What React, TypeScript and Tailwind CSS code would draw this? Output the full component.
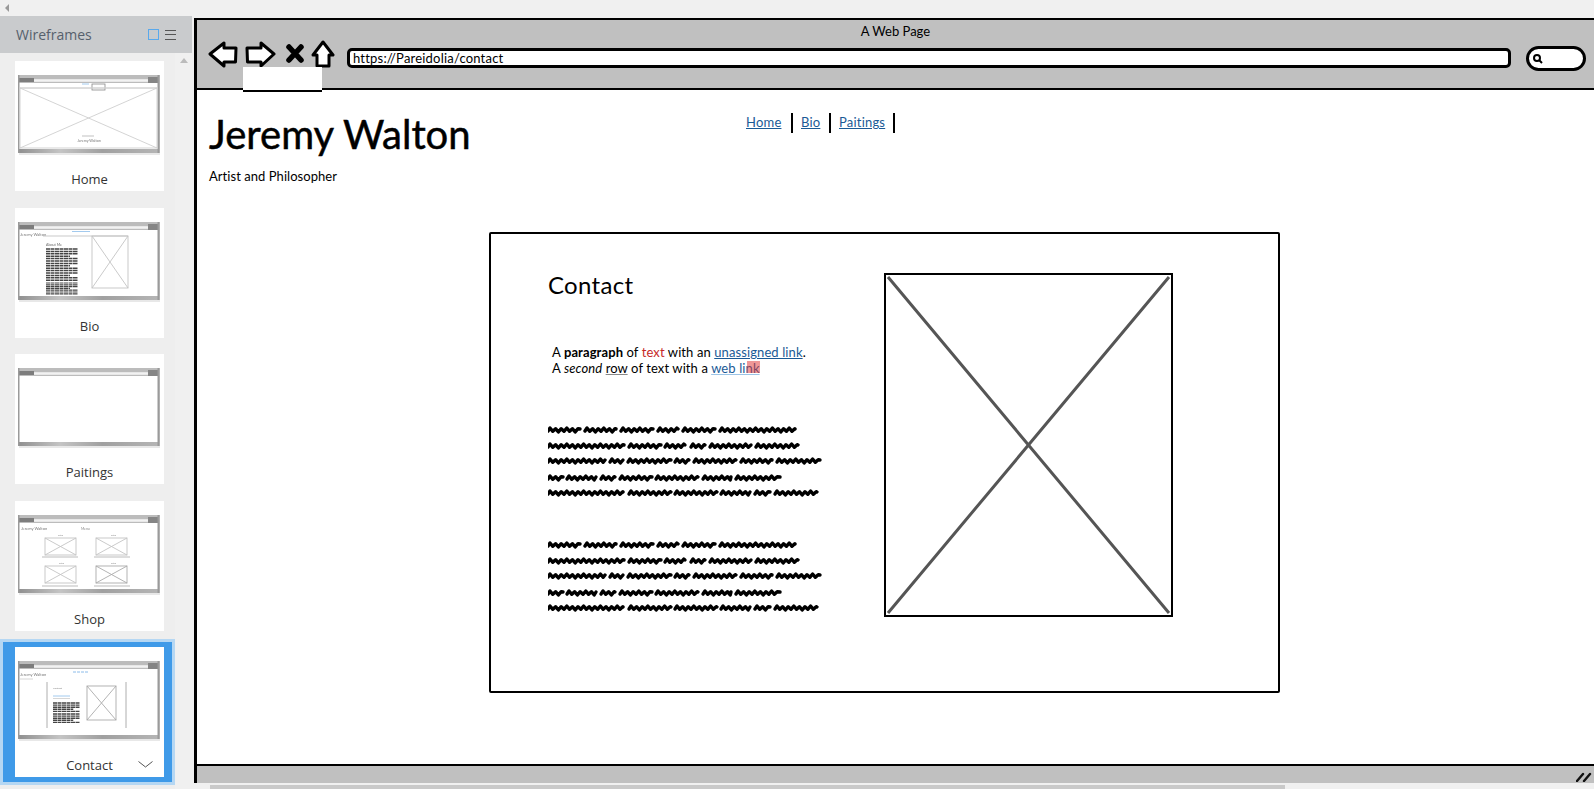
import React from "react";

const SK = { fontFamily: '"Lato", "Liberation Sans", sans-serif' };

const block = [
  [[0,32],[37,68],[73,105],[110,130],[135,167],[172,247]],
  [[0,76],[81,113],[117,137],[143,157],[162,203],[208,250]],
  [[0,57],[62,75],[80,123],[127,141],[146,188],[193,224],[229,272]],
  [[0,15],[19,48],[53,67],[72,104],[108,150],[155,183],[188,232]],
  [[0,75],[81,123],[127,169],[173,202],[207,222],[227,269]],
];
const ys = [4, 20, 35, 52, 67];

function wordPath(a: number, b: number, y: number) {
  let d = `M${a} ${y + 1}`;
  let up = true;
  let n = 0;
  for (let x = a + 2; x < b; x += 2.8) {
    const amp = n % 3 === 0 ? 2 : 1.3;
    d += ` L${x.toFixed(1)} ${y + (up ? -amp : amp)}`;
    up = !up;
    n++;
  }
  d += ` L${b} ${y - 1}`;
  return d;
}

function Scribble() {
  return (
    <svg width="274" height="72" viewBox="0 0 274 72" className="block">
      {block.map((line, i) =>
        line.map(([a, b], j) => (
          <path key={`${i}-${j}`} d={wordPath(a, b, ys[i])} fill="none" stroke="#000" strokeWidth="3.4" strokeLinejoin="round" strokeLinecap="round" />
        ))
      )}
    </svg>
  );
}

function Chrome({ children }: { children?: React.ReactNode }) {
  return (
    <svg width="143" height="80" viewBox="0 0 143 80" className="block blur-[0.35px]">
      <defs>
        <linearGradient id="g" x1="0" x2="1" y1="0" y2="0">
          <stop offset="0" stopColor="#8f8f8f" />
          <stop offset="0.3" stopColor="#c4c4c4" />
          <stop offset="0.6" stopColor="#a0a0a0" />
          <stop offset="1" stopColor="#b5b5b5" />
        </linearGradient>
      </defs>
      <rect x="1" y="1" width="141" height="79" fill="#e8e8e8" />
      <rect x="0.5" y="0.5" width="141" height="77" fill="#fff" stroke="#b0b0b0" strokeWidth="1" />
      <rect x="0" y="0" width="141" height="8" fill="#bcbcbc" />
      <rect x="1" y="3" width="15" height="4" fill="#7d7d7d" />
      <rect x="16" y="4.200" width="114" height="2.600" fill="#f2f2f2" />
      <rect x="130" y="2" width="10" height="6" fill="#858585" />
      <rect x="0" y="74" width="141" height="4" fill="url(#g)" />
      <rect x="0" y="0" width="1.500" height="78" fill="#9a9a9a" />
      <rect x="139.500" y="0" width="1.500" height="78" fill="#9a9a9a" />
      {children}
    </svg>
  );
}

function XBox({ x, y, w, h, c = "#c4c4c4" }: { x: number; y: number; w: number; h: number; c?: string }) {
  return (
    <g fill="none" stroke={c} strokeWidth="0.9">
      <rect x={x} y={y} width={w} height={h} />
      <path d={`M${x} ${y}L${x + w} ${y + h}M${x + w} ${y}L${x} ${y + h}`} />
    </g>
  );
}

const tinyLines = (x: number, y: number, n: number, w: number, step = 2.4, sw = 1.5) => (
  <g stroke="#444" strokeWidth={sw} strokeDasharray="4 0.5">
    {Array.from({ length: n }).map((_, i) => (
      <path key={i} d={`M${x} ${y + i * step}h${i % 4 === 3 ? w * 0.75 : w}`} />
    ))}
  </g>
);

function ThumbHome() {
  return (
    <Chrome>
      <rect x="74" y="9" width="13" height="6" fill="#fff" stroke="#888" strokeWidth="0.8" />
      <path d="M2 13H139" stroke="#ccc" strokeWidth="0.8" />
      <path d="M64 9h7" stroke="#8cbcea" strokeWidth="0.8" />
      <XBox x={2} y={13} w={137} h={60} c="#cfcfcf" />
      <path d="M64 61h12" stroke="#999" strokeWidth="0.6" />
      <text x="71" y="67" textAnchor="middle" fontSize="3.6" fill="#777" style={SK}>Jeremy Walton</text>
    </Chrome>
  );
}
function ThumbBio() {
  return (
    <Chrome>
      <text x="2" y="14" fontSize="4" fill="#777" style={SK}>Jeremy Walton</text>
      <path d="M54 9.500h18" stroke="#8cbcea" strokeWidth="0.8" />
      <path d="M25 14h85" stroke="#bbb" strokeWidth="0.8" />
      <XBox x={74} y={14} w={36} h={52} />
      <text x="28" y="24" fontSize="3.6" fill="#666" style={SK}>About Me</text>
      {tinyLines(28, 27, 14, 32)}
      {tinyLines(28, 61, 7, 32, 1.8, 1.2)}
    </Chrome>
  );
}
function ThumbShop() {
  return (
    <Chrome>
      <text x="3" y="15" fontSize="4" fill="#777" style={SK}>Jeremy Walton</text>
      <text x="63" y="15" fontSize="3.4" fill="#888" style={SK}>Menu</text>
      <text x="40" y="21" fontSize="2.6" fill="#888" style={SK}>Title</text>
      <text x="93" y="21" fontSize="2.6" fill="#888" style={SK}>Title</text>
      <text x="41" y="49" fontSize="2.6" fill="#888" style={SK}>Title</text>
      <text x="93" y="49" fontSize="2.6" fill="#888" style={SK}>Title</text>
      <XBox x={27} y={23} w={31} h={17} />
      <XBox x={78} y={23} w={31} h={17} />
      <XBox x={27} y={51} w={31} h={17} />
      <XBox x={78} y={51} w={31} h={17} c="#aaa" />
      <path d="M24 42h36M76 42h36M24 71h36M76 71h36" stroke="#aaa" strokeWidth="0.8" />
    </Chrome>
  );
}
function ThumbContact() {
  return (
    <Chrome>
      <text x="2" y="15" fontSize="4" fill="#777" style={SK}>Jeremy Walton</text>
      <path d="M55 11h15" stroke="#8cbcea" strokeWidth="1" strokeDasharray="3 1" />
      <path d="M2 18h13" stroke="#ccc" strokeWidth="0.8" />
      <path d="M29 21v46M108 21v46" stroke="#999" strokeWidth="0.8" />
      <text x="35" y="28" fontSize="2.6" fill="#888" style={SK}>Contact</text>
      <path d="M35 35h17" stroke="#8cbcea" strokeWidth="0.8" />
      <path d="M35 37.500h17" stroke="#ccc" strokeWidth="0.8" />
      {tinyLines(35, 42, 5, 27, 2.1, 1.4)}
      {tinyLines(35, 53, 5, 27, 2.1, 1.4)}
      <XBox x={69} y={25} w={29} h={34} c="#aaa" />
    </Chrome>
  );
}

const thumbs = [
  { label: "Home", t: <ThumbHome /> },
  { label: "Bio", t: <ThumbBio /> },
  { label: "Paitings", t: <Chrome /> },
  { label: "Shop", t: <ThumbShop /> },
];

function Card({ label, thumb }: { label: string; thumb: React.ReactNode }) {
  return (
    <div className="relative w-[149px] h-[130px] bg-white flex flex-col items-center pt-[14px] shrink-0">
      {thumb}
      <div className="mt-[16px] text-[13px] leading-[16px] text-[#333]" style={{ fontFamily: '"Open Sans", sans-serif' }}>{label}</div>
    </div>
  );
}

function Sidebar() {
  return (
    <aside className="w-[192px] shrink-0 flex flex-col bg-[#f0f0f0]" style={{ fontFamily: '"Open Sans", sans-serif' }}>
      <div className="h-[37px] bg-[#c9cbcd] flex items-center pl-4 pr-4 shrink-0">
        <span className="text-[14px] text-[#56606c] flex-1">Wireframes</span>
        <span className="w-[11px] h-[11px] border border-[#5aa9ec] mr-[6px]" />
        <span className="w-[11px] h-[10px] flex flex-col justify-between">
          <span className="h-px bg-[#555]" /><span className="h-px bg-[#555]" /><span className="h-px bg-[#555]" />
        </span>
      </div>
      <div className="flex flex-1 min-h-0">
        <div className="w-[175px] bg-[#eeeeee] flex flex-col pl-[15px] pt-2 gap-[16.5px] relative">
          {thumbs.map((c) => <Card key={c.label} label={c.label} thumb={c.t} />)}
          <div className="w-[175px] -ml-[15px] -mt-[8.5px] h-[146px] border-[3px] border-[#b5d7f3] bg-[#3f9ae8] shrink-0 pl-[12px] pt-[5px]">
            <div className="relative w-[149px]">
              <Card label="Contact" thumb={<ThumbContact />} />
              <svg width="15" height="7" viewBox="0 0 15 7" className="absolute right-[11px] bottom-[9px]">
                <path d="M0.500 0.500L7.500 6L14.500 0.500" fill="none" stroke="#555" strokeWidth="1" />
              </svg>
            </div>
          </div>
        </div>
        <div className="flex-1 flex justify-center pt-[5px]">
          <span className="w-0 h-0 border-x-[4px] border-x-transparent border-b-[5px] border-b-[#bbbbbb]" />
        </div>
      </div>
    </aside>
  );
}

function Toolbar() {
  return (
    <div className="flex items-center h-[30px] ml-[11px]">
      <svg width="130" height="30" viewBox="208 40 130 30" className="shrink-0 -mt-[2px]">
        <g fill="#fff" stroke="#000" strokeWidth="3" strokeLinejoin="round">
          <path d="M210 54L224 43V48H236L235.500 62H224V66Z" />
          <path d="M247 48H261V43L274 54L261 66V62H247.500Z" />
          <path d="M323 42L333 55H329V66H317V55H313Z" />
        </g>
        <path d="M289 47L301 60M301 47L289 60" stroke="#000" strokeWidth="5.500" strokeLinecap="round" />
      </svg>
      <div className="ml-[9px] flex-1 h-[20px] border-[3px] border-black rounded-[5px] bg-white flex items-center pl-[3px] text-[13px] tracking-[0.2px] text-black leading-none mt-[4px]" style={SK}>
        https://Pareidolia/contact
      </div>
      <div className="ml-[15px] mr-[8px] w-[60px] h-[25px] border-[3px] border-black rounded-[14px] bg-white flex items-center pl-[3px] mt-[4px]">
        <svg width="11" height="11" viewBox="0 0 11 11">
          <circle cx="5" cy="5" r="3" fill="none" stroke="#000" strokeWidth="2" />
          <path d="M7 7L10 10" stroke="#000" strokeWidth="2" />
        </svg>
      </div>
    </div>
  );
}

function Contact() {
  return (
    <div className="relative w-[791px] h-[461px] ml-[292px] border-2 border-black rounded-[2px] flex pl-[57px] pt-[38px]">
      <div className="w-[336px] shrink-0">
        <h2 className="text-[24px] leading-[30px] tracking-[0.3px] text-black -mt-[2px]">Contact</h2>
        <p className="mt-[44px] ml-[4px] text-[13px] leading-[16px] tracking-[0.1px] text-black">
          A <b>paragraph</b> of <span className="text-[#c62828]">text</span> with an{" "}
          <a className="text-[#1a5a96] underline">unassigned link</a>.
          <br />
          A <i>second</i> <span className="underline decoration-[#888]">row</span> of text with a{" "}
          <a className="relative text-[#1a5a96] underline decoration-[#9cc4e6]">
            web link
            <span className="absolute right-0 top-[1px] w-[13px] h-[12px] bg-[#e03030] opacity-50" />
          </a>
        </p>
        <div className="mt-[50px]"><Scribble /></div>
        <div className="mt-[43px]"><Scribble /></div>
      </div>
      <svg width="289" height="344" viewBox="0 0 289 344" className="shrink-0 mt-[1px]">
        <rect x="1" y="1" width="287" height="342" fill="#fff" stroke="#000" strokeWidth="2" />
        <path d="M4 4L285 340M285 4L4 340" stroke="#555" strokeWidth="3" />
      </svg>
    </div>
  );
}

function Main() {
  return (
    <div className="flex-1 min-w-0 flex flex-col">
      <main className="relative flex-1 ml-[2px] mt-[2px] min-h-0 flex flex-col border-l-[3px] border-t-[2px] border-black" style={SK}>
        <div className="h-[70px] bg-[#c0c0c0] border-b-2 border-black shrink-0 relative">
          <div className="h-[21px] text-center text-[13px] leading-[23px] text-black">A Web Page</div>
          <Toolbar />
          <div className="absolute left-[46px] top-[47px] w-[79px] h-[25px] bg-white border-b-2 border-black" />
        </div>
        <div className="flex-1 bg-white min-h-0 flex flex-col">
          <div className="relative h-[142px] shrink-0 pl-[12px] pt-[19px]">
            <h1 className="text-[40px] leading-[50px] text-black [-webkit-text-stroke:0.5px_#000]">Jeremy Walton</h1>
            <div className="mt-[9px] text-[13px] leading-[16px] tracking-[0.05px] text-black">Artist and Philosopher</div>
            <nav className="absolute left-[549px] top-[23px] flex items-center text-[13px] tracking-[0.2px] text-[#1a5a96]">
              <a className="underline w-[45px]">Home</a>
              <span className="w-[2px] h-[20px] bg-black" />
              <a className="underline ml-[8px] w-[28px]">Bio</a>
              <span className="w-[2px] h-[20px] bg-black" />
              <a className="underline ml-[8px] w-[54px]">Paitings</a>
              <span className="w-[2px] h-[20px] bg-black" />
            </nav>
          </div>
          <Contact />
        </div>
        <div className="h-[19px] bg-[#c0c0c0] border-t-2 border-black shrink-0 flex justify-end items-end pr-[2px] pb-[1px]">
          <svg width="16" height="11" viewBox="0 0 16 11">
            <path d="M1 10L7 3M8 10L14 3" stroke="#111" strokeWidth="2.400" strokeLinecap="round" />
          </svg>
        </div>
      </main>
      <div className="h-[6px] shrink-0 bg-[#f0f0f0] pl-[18px] pr-[309px] pt-[2px]">
        <div className="h-[4px] bg-[#c9c9c9]" />
      </div>
    </div>
  );
}

export default function App() {
  return (
    <div className="w-[1594px] h-[789px] overflow-hidden bg-[#f0f0f0] flex flex-col relative">
      <div className="h-[16px] shrink-0 flex items-center pl-[5px]">
        <span className="w-0 h-0 border-y-[4px] border-y-transparent border-r-[4px] border-r-[#999]" />
      </div>
      <div className="flex flex-1 min-h-0">
        <Sidebar />
        <Main />
      </div>
    </div>
  );
}
